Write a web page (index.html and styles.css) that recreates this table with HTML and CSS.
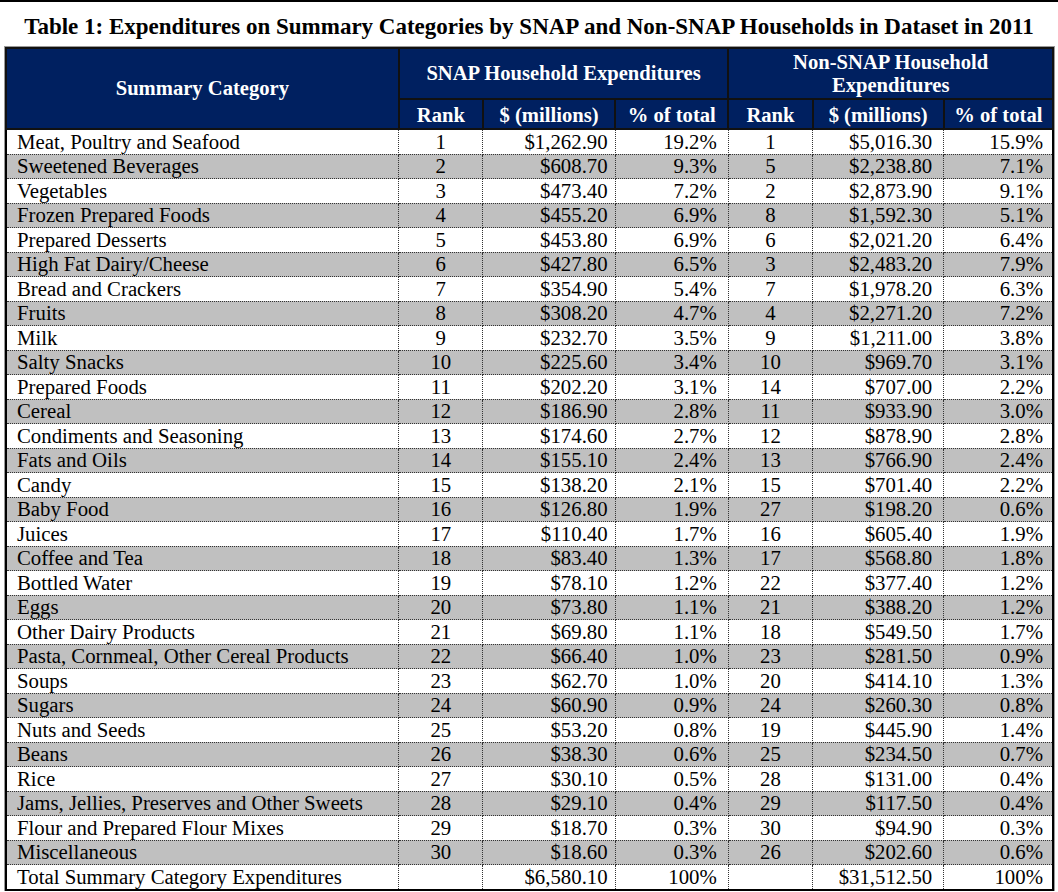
FILE: index.html
```html
<!DOCTYPE html>
<html>
<head>
<meta charset="utf-8">
<link rel="stylesheet" href="styles.css">
</head>
<body>
<div class="topline"></div>
<h1 class="title">Table 1: Expenditures on Summary Categories by SNAP and Non-SNAP Households in Dataset in 2011</h1>
<table class="data">
<colgroup>
<col class="c-cat"><col class="c-rank"><col class="c-dol"><col class="c-pct"><col class="c-rank2"><col class="c-dol2"><col class="c-pct2">
</colgroup>
<thead>
<tr class="h1">
<th rowspan="2" class="hcat">Summary Category</th>
<th colspan="3">SNAP Household Expenditures</th>
<th colspan="3">Non-SNAP Household<br>Expenditures</th>
</tr>
<tr class="h2">
<th>Rank</th><th>$ (millions)</th><th>% of total</th>
<th>Rank</th><th>$ (millions)</th><th>% of total</th>
</tr>
</thead>
<tbody>
<tr><td class="cat">Meat, Poultry and Seafood</td><td class="rk">1</td><td class="d1">$1,262.90</td><td class="p1">19.2%</td><td class="rk">1</td><td class="d2">$5,016.30</td><td class="p2">15.9%</td></tr>
<tr class="g"><td class="cat">Sweetened Beverages</td><td class="rk">2</td><td class="d1">$608.70</td><td class="p1">9.3%</td><td class="rk">5</td><td class="d2">$2,238.80</td><td class="p2">7.1%</td></tr>
<tr><td class="cat">Vegetables</td><td class="rk">3</td><td class="d1">$473.40</td><td class="p1">7.2%</td><td class="rk">2</td><td class="d2">$2,873.90</td><td class="p2">9.1%</td></tr>
<tr class="g"><td class="cat">Frozen Prepared Foods</td><td class="rk">4</td><td class="d1">$455.20</td><td class="p1">6.9%</td><td class="rk">8</td><td class="d2">$1,592.30</td><td class="p2">5.1%</td></tr>
<tr><td class="cat">Prepared Desserts</td><td class="rk">5</td><td class="d1">$453.80</td><td class="p1">6.9%</td><td class="rk">6</td><td class="d2">$2,021.20</td><td class="p2">6.4%</td></tr>
<tr class="g"><td class="cat">High Fat Dairy/Cheese</td><td class="rk">6</td><td class="d1">$427.80</td><td class="p1">6.5%</td><td class="rk">3</td><td class="d2">$2,483.20</td><td class="p2">7.9%</td></tr>
<tr><td class="cat">Bread and Crackers</td><td class="rk">7</td><td class="d1">$354.90</td><td class="p1">5.4%</td><td class="rk">7</td><td class="d2">$1,978.20</td><td class="p2">6.3%</td></tr>
<tr class="g"><td class="cat">Fruits</td><td class="rk">8</td><td class="d1">$308.20</td><td class="p1">4.7%</td><td class="rk">4</td><td class="d2">$2,271.20</td><td class="p2">7.2%</td></tr>
<tr><td class="cat">Milk</td><td class="rk">9</td><td class="d1">$232.70</td><td class="p1">3.5%</td><td class="rk">9</td><td class="d2">$1,211.00</td><td class="p2">3.8%</td></tr>
<tr class="g"><td class="cat">Salty Snacks</td><td class="rk">10</td><td class="d1">$225.60</td><td class="p1">3.4%</td><td class="rk">10</td><td class="d2">$969.70</td><td class="p2">3.1%</td></tr>
<tr><td class="cat">Prepared Foods</td><td class="rk">11</td><td class="d1">$202.20</td><td class="p1">3.1%</td><td class="rk">14</td><td class="d2">$707.00</td><td class="p2">2.2%</td></tr>
<tr class="g"><td class="cat">Cereal</td><td class="rk">12</td><td class="d1">$186.90</td><td class="p1">2.8%</td><td class="rk">11</td><td class="d2">$933.90</td><td class="p2">3.0%</td></tr>
<tr><td class="cat">Condiments and Seasoning</td><td class="rk">13</td><td class="d1">$174.60</td><td class="p1">2.7%</td><td class="rk">12</td><td class="d2">$878.90</td><td class="p2">2.8%</td></tr>
<tr class="g"><td class="cat">Fats and Oils</td><td class="rk">14</td><td class="d1">$155.10</td><td class="p1">2.4%</td><td class="rk">13</td><td class="d2">$766.90</td><td class="p2">2.4%</td></tr>
<tr><td class="cat">Candy</td><td class="rk">15</td><td class="d1">$138.20</td><td class="p1">2.1%</td><td class="rk">15</td><td class="d2">$701.40</td><td class="p2">2.2%</td></tr>
<tr class="g"><td class="cat">Baby Food</td><td class="rk">16</td><td class="d1">$126.80</td><td class="p1">1.9%</td><td class="rk">27</td><td class="d2">$198.20</td><td class="p2">0.6%</td></tr>
<tr><td class="cat">Juices</td><td class="rk">17</td><td class="d1">$110.40</td><td class="p1">1.7%</td><td class="rk">16</td><td class="d2">$605.40</td><td class="p2">1.9%</td></tr>
<tr class="g"><td class="cat">Coffee and Tea</td><td class="rk">18</td><td class="d1">$83.40</td><td class="p1">1.3%</td><td class="rk">17</td><td class="d2">$568.80</td><td class="p2">1.8%</td></tr>
<tr><td class="cat">Bottled Water</td><td class="rk">19</td><td class="d1">$78.10</td><td class="p1">1.2%</td><td class="rk">22</td><td class="d2">$377.40</td><td class="p2">1.2%</td></tr>
<tr class="g"><td class="cat">Eggs</td><td class="rk">20</td><td class="d1">$73.80</td><td class="p1">1.1%</td><td class="rk">21</td><td class="d2">$388.20</td><td class="p2">1.2%</td></tr>
<tr><td class="cat">Other Dairy Products</td><td class="rk">21</td><td class="d1">$69.80</td><td class="p1">1.1%</td><td class="rk">18</td><td class="d2">$549.50</td><td class="p2">1.7%</td></tr>
<tr class="g"><td class="cat">Pasta, Cornmeal, Other Cereal Products</td><td class="rk">22</td><td class="d1">$66.40</td><td class="p1">1.0%</td><td class="rk">23</td><td class="d2">$281.50</td><td class="p2">0.9%</td></tr>
<tr><td class="cat">Soups</td><td class="rk">23</td><td class="d1">$62.70</td><td class="p1">1.0%</td><td class="rk">20</td><td class="d2">$414.10</td><td class="p2">1.3%</td></tr>
<tr class="g"><td class="cat">Sugars</td><td class="rk">24</td><td class="d1">$60.90</td><td class="p1">0.9%</td><td class="rk">24</td><td class="d2">$260.30</td><td class="p2">0.8%</td></tr>
<tr><td class="cat">Nuts and Seeds</td><td class="rk">25</td><td class="d1">$53.20</td><td class="p1">0.8%</td><td class="rk">19</td><td class="d2">$445.90</td><td class="p2">1.4%</td></tr>
<tr class="g"><td class="cat">Beans</td><td class="rk">26</td><td class="d1">$38.30</td><td class="p1">0.6%</td><td class="rk">25</td><td class="d2">$234.50</td><td class="p2">0.7%</td></tr>
<tr><td class="cat">Rice</td><td class="rk">27</td><td class="d1">$30.10</td><td class="p1">0.5%</td><td class="rk">28</td><td class="d2">$131.00</td><td class="p2">0.4%</td></tr>
<tr class="g"><td class="cat">Jams, Jellies, Preserves and Other Sweets</td><td class="rk">28</td><td class="d1">$29.10</td><td class="p1">0.4%</td><td class="rk">29</td><td class="d2">$117.50</td><td class="p2">0.4%</td></tr>
<tr><td class="cat">Flour and Prepared Flour Mixes</td><td class="rk">29</td><td class="d1">$18.70</td><td class="p1">0.3%</td><td class="rk">30</td><td class="d2">$94.90</td><td class="p2">0.3%</td></tr>
<tr class="g"><td class="cat">Miscellaneous</td><td class="rk">30</td><td class="d1">$18.60</td><td class="p1">0.3%</td><td class="rk">26</td><td class="d2">$202.60</td><td class="p2">0.6%</td></tr>
<tr><td class="cat">Total Summary Category Expenditures</td><td class="rk"></td><td class="d1">$6,580.10</td><td class="p1">100%</td><td class="rk"></td><td class="d2">$31,512.50</td><td class="p2">100%</td></tr>
</tbody>
</table>
</body>
</html>
```

FILE: styles.css
```css
html, body {
  margin: 0;
  padding: 0;
  background: #fff;
}
body {
  font-family: "Liberation Serif", "Times New Roman", serif;
  color: #000;
}
.topline {
  height: 2px;
  background: #000;
}
.title {
  margin: 0 0 5px 0;
  padding: 10px 0 0 0;
  font-size: 23px;
  font-weight: bold;
  text-align: center;
  line-height: 30px;
  white-space: nowrap;
}
.data {
  margin-left: 5px;
  width: 1049px;
  border-collapse: collapse;
  table-layout: fixed;
  border: 2px solid #000;
  box-shadow: 0 0 0 1px #999;
  font-size: 20.8px;
}
.c-cat { width: 392px; }
.c-rank { width: 84px; }
.c-dol { width: 132px; }
.c-pct { width: 113px; }
.c-rank2 { width: 84px; }
.c-dol2 { width: 131px; }
.c-pct2 { width: 109px; }

.data th {
  background: #002060;
  color: #fff;
  font-weight: bold;
  font-size: 20.6px;
  border: 2px solid #111;
  padding: 0;
  line-height: 23px;
  text-align: center;
}
.h1 { height: 51px; }
.h2 { height: 30px; }
.h2 th { vertical-align: bottom; padding-bottom: 1px; }

.data td {
  border: 1px dotted #333;
  padding: 0;
  height: 23.5px;
  line-height: 22px;
  white-space: nowrap;
}
.data tr.g td { background: #c0c0c0; }
.data tbody tr:first-child td { border-top: 2px solid #111; }
.cat { padding-left: 10px !important; text-align: left; }
.rk { text-align: center; }
.d1 { text-align: right; padding-right: 7px !important; }
.p1 { text-align: right; padding-right: 11px !important; }
.d2 { text-align: right; padding-right: 11px !important; }
.p2 { text-align: right; padding-right: 9px !important; }
```
